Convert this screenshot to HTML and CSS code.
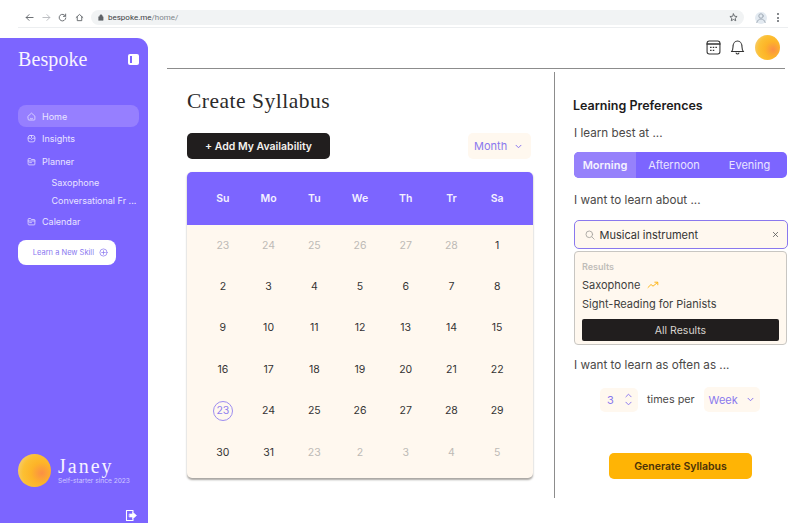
FILE: index.html
```html
<!DOCTYPE html>
<html lang="en">
<head>
<meta charset="utf-8">
<title>Bespoke</title>
<link rel="stylesheet" href="styles.css">
</head>
<body>
<header class="chrome">
  <div class="chrome-nav">
    <svg class="ci" viewBox="0 0 10 10"><path d="M9 5H1.500M4.500 1.800 1.300 5l3.200 3.200" /></svg>
    <svg class="ci faded" viewBox="0 0 10 10"><path d="M1 5h7.500M5.500 1.800 8.700 5 5.500 8.200" /></svg>
    <svg class="ci" viewBox="0 0 10 10"><path d="M8.300 3.400A3.700 3.700 0 1 0 8.700 5.500M8.500 1.200v2.500H6" /></svg>
    <svg class="ci" viewBox="0 0 10 10"><path d="M1.300 5 5 1.600 8.700 5M2.500 4.200v4.300h5V4.200" /></svg>
  </div>
  <div class="url">
    <svg class="lock" viewBox="0 0 8 10"><path d="M1 4h6v5H1zM2.300 4V2.700a1.700 1.700 0 0 1 3.400 0V4" /></svg>
    <span class="host">bespoke.me</span><span class="path">/home/</span>
    <svg class="star" viewBox="0 0 10 10"><path d="m5 1 1.200 2.600 2.800.3-2.100 1.900.6 2.800L5 7.200 2.500 8.600l.6-2.800L1 3.900l2.800-.3z" /></svg>
  </div>
  <div class="chrome-end">
    <span class="profile"><svg viewBox="0 0 12 12"><circle cx="6" cy="4" r="2.200" /><path d="M1.800 10.500c.6-2.400 2.400-3.500 4.200-3.500s3.600 1.100 4.200 3.500" /></svg></span>
    <span class="dots"><i></i><i></i><i></i></span>
  </div>
</header>

<div class="app">
  <aside class="sidebar">
    <div class="brand">
      <span class="logo">Bespoke</span>
      <span class="panel-icon"><i></i></span>
    </div>
    <nav class="nav">
      <a class="nav-item active">
        <svg class="ni" viewBox="0 0 12 12"><path d="M1.500 5.500 6 1.500l4.500 4v4.200a1 1 0 0 1-1 1h-7a1 1 0 0 1-1-1z" /><path d="M4.500 8.500c1 .7 2 .7 3 0" /></svg>
        Home
      </a>
      <a class="nav-item">
        <svg class="ni" viewBox="0 0 12 12"><rect x="1.500" y="2" width="9" height="8.500" rx="2.500" /><path d="M1.500 5.500h2.500l2 2 2-2h2.500M6 2v3" /></svg>
        Insights
      </a>
      <a class="nav-item">
        <svg class="ni" viewBox="0 0 12 12"><path d="M1.500 3a1 1 0 0 1 1-1h2.300l1 1.300h3.700a1 1 0 0 1 1 1v5.200a1 1 0 0 1-1 1h-7a1 1 0 0 1-1-1zM1.500 5.300h9M3.500 7.500h2.500" /></svg>
        Planner
      </a>
      <a class="nav-sub first">Saxophone</a>
      <a class="nav-sub">Conversational Fr ...</a>
      <a class="nav-item cal">
        <svg class="ni" viewBox="0 0 12 12"><path d="M1.500 3a1 1 0 0 1 1-1h2.300l1 1.300h3.700a1 1 0 0 1 1 1v5.200a1 1 0 0 1-1 1h-7a1 1 0 0 1-1-1zM1.500 5.300h9M3.500 7.500h2.500" /></svg>
        Calendar
      </a>
    </nav>
    <button class="learn">Learn a New Skill
      <svg viewBox="0 0 10 10"><circle cx="5" cy="5" r="4" /><path d="M5 3v4M3 5h4" /></svg>
    </button>
    <div class="user">
      <span class="avatar big"></span>
      <div class="user-text">
        <div class="user-name">Janey</div>
        <div class="user-tag">Self-starter since 2023</div>
      </div>
    </div>
    <div class="logout">
      <svg viewBox="0 0 12 13"><path class="out" d="M8 3V1.500H1.500v10H8V10" /><path class="arrow" d="M4.500 5h3V3l4 3.500-4 3.500V8h-3z" /></svg>
    </div>
  </aside>

  <main class="main">
    <div class="topbar">
      <svg class="t-ico" viewBox="0 0 14 14"><rect x="1" y="1" width="12" height="12" rx="2" /><path class="thick" d="M1 3.800h12" /><path class="dotted" d="M3.800 6.800h1.400M6.300 6.800h1.400M8.800 6.800h1.400M3.800 9.600h1.400M6.300 9.600h1.400" /></svg>
      <svg class="t-ico" viewBox="0 0 14 14"><path d="M1.300 10.800c1.200-1 1.500-2.300 1.500-4.300C2.800 3.300 4.600 1 7 1s4.200 2.300 4.200 5.500c0 2 .3 3.300 1.500 4.300zM5.700 12.200c.5 1.100 2.100 1.100 2.600 0" /></svg>
      <span class="avatar small"></span>
    </div>
    <div class="rule"></div>
    <div class="content">
      <section class="left">
        <h1>Create Syllabus</h1>
        <div class="toolbar">
          <button class="add">+ Add My Availability</button>
          <div class="select month">Month <svg class="chev" viewBox="0 0 8 6"><path d="m1 1.500 3 3 3-3" /></svg></div>
        </div>
        <div class="calendar">
          <div class="cal-head">
            <span>Su</span><span>Mo</span><span>Tu</span><span>We</span><span>Th</span><span>Tr</span><span>Sa</span>
          </div>
          <div class="cal-body">
            <span class="mute">23</span><span class="mute">24</span><span class="mute">25</span><span class="mute">26</span><span class="mute">27</span><span class="mute">28</span><span>1</span>
            <span>2</span><span>3</span><span>4</span><span>5</span><span>6</span><span>7</span><span>8</span>
            <span>9</span><span>10</span><span>11</span><span>12</span><span>13</span><span>14</span><span>15</span>
            <span>16</span><span>17</span><span>18</span><span>19</span><span>20</span><span>21</span><span>22</span>
            <span class="today"><b>23</b></span><span>24</span><span>25</span><span>26</span><span>27</span><span>28</span><span>29</span>
            <span>30</span><span>31</span><span class="mute">23</span><span class="mute">2</span><span class="mute">3</span><span class="mute">4</span><span class="mute">5</span>
          </div>
        </div>
      </section>
      <section class="right">
        <h2>Learning Preferences</h2>
        <p class="label first">I learn best at ...</p>
        <div class="segments">
          <span class="seg on">Morning</span>
          <span class="seg mid">Afternoon</span>
          <span class="seg end">Evening</span>
        </div>
        <p class="label about">I want to learn about ...</p>
        <div class="search">
          <svg class="s-ico" viewBox="0 0 10 10"><circle cx="4.300" cy="4.300" r="3.300" /><path d="m6.800 6.800 2.400 2.400" /></svg>
          <span class="s-text">Musical instrument</span>
          <svg class="s-x" viewBox="0 0 8 8"><path d="m1.500 1.500 5 5M6.500 1.500l-5 5" /></svg>
        </div>
        <div class="results">
          <div class="r-title">Results</div>
          <div class="r-item">Saxophone
            <svg class="trend" viewBox="0 0 12 8"><path d="m1 6.500 3-3 2 1.700L10.500 1.500M7.800 1.200h3v2.600" /></svg>
          </div>
          <div class="r-item">Sight-Reading for Pianists</div>
          <button class="all">All Results</button>
        </div>
        <p class="label often">I want to learn as often as ...</p>
        <div class="freq">
          <div class="stepper">3
            <span class="arrows">
              <svg viewBox="0 0 8 5"><path d="m1 4 3-3 3 3" /></svg>
              <svg viewBox="0 0 8 5"><path d="m1 1 3 3 3-3" /></svg>
            </span>
          </div>
          <span class="times">times per</span>
          <div class="select week">Week <svg class="chev" viewBox="0 0 8 6"><path d="m1 1.500 3 3 3-3" /></svg></div>
        </div>
        <div class="gen-wrap"><button class="generate">Generate Syllabus</button></div>
      </section>
    </div>
  </main>
</div>
</body>
</html>
```
FILE: styles.css
```css
* { box-sizing: border-box; }
html, body { margin: 0; height: 100%; }
body {
  width: 806px;
  height: 523px;
  overflow: hidden;
  background: #fff;
  font-family: "Inter", "Liberation Sans", sans-serif;
  color: #2c2a2a;
}
svg { display: block; fill: none; stroke: currentColor; stroke-linecap: round; stroke-linejoin: round; }
button { font-family: inherit; border: 0; padding: 0; }
p, h1, h2 { margin: 0; }

/* browser chrome */
.chrome {
  height: 28px;
  margin: 0 18px 0 18px;
  padding: 10px 0 0 7px;
  display: flex;
  align-items: flex-start;
  border-bottom: 1px solid #eceef0;
}
.chrome-nav { display: flex; gap: 7.500px; width: 66px; padding-top: 3px; color: #5f6368; }
.ci { width: 9px; height: 9px; stroke-width: 1; }
.ci.faded { color: #b5b8bc; }
.url {
  width: 653px;
  height: 15px;
  flex: none;
  background: #f1f3f4;
  border-radius: 8px;
  display: flex;
  align-items: center;
  padding: 0 6px 0 7px;
  font-size: 8px;
  font-family: "Roboto", sans-serif;
}
.lock { width: 6px; height: 7px; margin-right: 4px; color: #5f6368; fill: #5f6368; stroke-width: .8; }
.host { color: #3c4043; }
.path { color: #80868b; }
.star { width: 9px; height: 9px; margin-left: auto; color: #5f6368; stroke-width: 1; }
.chrome-end { display: flex; align-items: center; height: 15px; margin-left: 11px; gap: 10px; }
.profile {
  width: 12px; height: 12px; border-radius: 50%;
  background: #e3eaf1; color: #a3adb8; display: block;
}
.profile svg { width: 12px; height: 12px; stroke-width: 1; }
.dots { display: flex; flex-direction: column; gap: 1.500px; }
.dots i { width: 2px; height: 2px; background: #5f6368; border-radius: 50%; display: block; }

/* app */
.app { display: flex; height: 495px; padding-top: 10px; }
.sidebar {
  width: 148px;
  flex: none;
  height: 485px;
  background: #7c65ff;
  border-radius: 0 11px 0 0;
  padding: 10px 9px 0 18px;
  display: flex;
  flex-direction: column;
  color: #fff;
}
.brand { display: flex; align-items: center; justify-content: space-between; height: 22px; }
.logo { font-family: "Liberation Serif", serif; font-size: 20px; color: #f8f3ff; letter-spacing: .1px; }
.panel-icon {
  width: 11px; height: 11px; background: #fff; border-radius: 2px;
  padding: 2px; display: block;
}
.panel-icon i { display: block; width: 2px; height: 7px; background: #7c65ff; }
.nav { margin-top: 35px; display: flex; flex-direction: column; }
.nav-item {
  height: 22px;
  border-radius: 8px;
  display: flex;
  align-items: center;
  gap: 6px;
  padding-left: 9px;
  font-size: 9px;
  color: #e9e4ff;
  margin-bottom: .7px;
}
.nav-item.active { background: #967fff; }
.ni { width: 9px; height: 9px; stroke-width: 1; flex: none; }
.nav-sub {
  height: 18px;
  display: flex;
  align-items: center;
  padding-left: 33.500px;
  font-size: 9px;
  color: #e9e4ff;
  white-space: nowrap;
}
.nav-sub.first { margin-top: .5px; }
.nav-item.cal { margin-top: 1px; }
.learn {
  margin-top: 7px;
  width: 98px;
  height: 25px;
  background: #fff;
  border-radius: 8px;
  color: #8a78f0;
  font-size: 7.500px;
  display: flex;
  align-items: center;
  justify-content: flex-end;
  gap: 5px;
  padding-right: 8px;
}
.learn svg { width: 9px; height: 9px; stroke-width: .8; }
.user { margin-top: auto; display: flex; align-items: center; gap: 7px; }
.avatar {
  display: block;
  border-radius: 50%;
  background: radial-gradient(circle at 72% 58%, #fb8f45 0%, #fdb428 35%, #fcc033 62%, #f0d5a0 100%);
  flex: none;
}
.avatar.big { width: 33px; height: 33px; }
.avatar.small { width: 25px; height: 25px; margin-left: 1px; }
.user-name { font-family: "Liberation Serif", serif; font-size: 20px; line-height: 20px; color: #f6f2ff; letter-spacing: 2px; }
.user-tag { font-size: 6.600px; color: #cfc6ff; line-height: 8px; margin-top: 1px; white-space: nowrap; }
.logout { margin-top: 22px; height: 14px; display: flex; justify-content: flex-end; padding-right: 2px; }
.logout svg { width: 12px; height: 13px; stroke-width: 1.100; }
.logout .arrow { fill: #fff; stroke: #fff; stroke-width: .6; }

/* main */
.main { flex: 1; padding: 0 21px 0 19px; min-width: 0; display: flex; flex-direction: column; }
.topbar { height: 30px; flex: none; padding: 0 5px 12px 0; display: flex; justify-content: flex-end; align-items: center; gap: 9px; color: #333; }
.t-ico { width: 15px; height: 15px; stroke-width: 1; }
.thick { stroke-width: 1.400; }
.dotted { stroke-width: 1.200; stroke-linecap: butt; }
.rule { height: 1px; background: #8c8c8c; flex: none; }
.content { display: flex; flex: 1; padding-top: 3px; }
.left { width: 387px; padding: 16px 21px 0 20px; flex: none; }
h1 {
  font-family: "Liberation Serif", serif;
  font-weight: 400;
  font-size: 21.500px;
  line-height: 26px;
  color: #2b2a2a;
  letter-spacing: .5px;
}
.toolbar { display: flex; justify-content: space-between; align-items: center; margin-top: 19px; padding-right: 2px; }
.add {
  width: 143px; height: 26px; background: #211e1e; color: #f5f2ee; border-radius: 5px;
  font-size: 10.500px; font-weight: 600;
}
.select {
  background: #fff8ef;
  border-radius: 5px;
  color: #8a78ee;
  display: flex;
  align-items: center;
  font-size: 11px;
}
.month { width: 63px; height: 26px; padding-left: 6px; gap: 8px; }
.chev { width: 7px; height: 5px; stroke-width: 1.200; }
.calendar {
  margin-top: 12.500px;
  width: 346px;
  height: 306px;
  border-radius: 5px;
  overflow: hidden;
  background: #fff8ef;
  box-shadow: 0 1.500px 2px #a9a6a2;
}
.cal-head {
  height: 53px;
  background: #7c65ff;
  padding: 0 13px;
  display: grid;
  grid-template-columns: repeat(7, 1fr);
  align-items: center;
  justify-items: center;
  color: #f4f1ff;
  font-size: 10.500px;
  font-weight: 600;
}
.cal-body {
  display: grid;
  grid-template-columns: repeat(7, 1fr);
  grid-auto-rows: 41.400px;
  padding: 0 13px;
  font-size: 10.500px;
  color: #333;
}
.cal-body span { display: flex; align-items: center; justify-content: center; }
.cal-body .mute { color: #bdbab6; }
.today b {
  font-weight: 400;
  width: 20px; height: 20px;
  border: 1px solid #9d8df0;
  border-radius: 50%;
  color: #8f7ff0;
  display: flex; align-items: center; justify-content: center;
}

/* right */
.right {
  width: 233px;
  flex: none;
  height: 426px;
  border-left: 1px solid #8c8c8c;
  padding: 27px 0 0 19px;
  font-size: 12px;
}
h2 { font-size: 12.500px; font-weight: 600; color: #1d1b1b; line-height: 14px; margin-left: -1px; }
.label { font-size: 11.700px; line-height: 15px; color: #4b4948; }
.label.first { margin-top: 13px; }
.segments {
  margin-top: 11px;
  width: 213px;
  height: 26px;
  background: #7c65ff;
  border-radius: 5px;
  overflow: hidden;
  display: flex;
  color: #e9e4ff;
  font-size: 11px;
}
.seg { display: flex; align-items: center; justify-content: center; }
.seg.on { width: 62px; background: #9681fb; font-weight: 600; color: #f5f2ff; }
.seg.mid { width: 76px; }
.seg.end { flex: 1; }
.label.about { margin-top: 15px; }
.search {
  margin-top: 12px;
  width: 214px;
  height: 29px;
  border: 1.500px solid #8a78ee;
  border-radius: 5px;
  background: #fff8ef;
  display: flex;
  align-items: center;
  padding: 0 8px 0 10px;
  margin-left: -.5px;
}
.s-ico { width: 10px; height: 10px; color: #a8a6a2; stroke-width: .9; }
.s-text { margin-left: 5px; font-size: 11px; color: #333; }
.s-x { width: 7px; height: 7px; margin-left: auto; color: #555; stroke-width: .9; }
.results {
  margin-top: 2px;
  width: 213px;
  height: 94px;
  border: 1px solid #c8c6c2;
  border-radius: 4px;
  background: #fff8ef;
  padding: 9px 7px 0 7px;
  font-size: 11px;
  color: #403e3d;
}
.r-title { font-size: 9px; font-weight: 600; color: #bfbdb9; line-height: 11px; }
.r-item { display: flex; align-items: center; gap: 7px; line-height: 14px; height: 14px; margin-top: 5.500px; }
.trend { width: 12px; height: 8px; color: #fdb61a; stroke-width: 1; }
.all {
  margin-top: 8px;
  display: block;
  width: 197px;
  height: 22px;
  background: #211e1e;
  color: #d8d4cf;
  font-size: 10.500px;
  border-radius: 2px;
}
.label.often { margin-top: 13px; }
.freq { display: flex; align-items: center; margin-top: 14px; padding-left: 26px; }
.stepper {
  width: 38px;
  height: 24px;
  border-radius: 5px;
  background: #fff8ef;
  color: #8a78ee;
  display: flex;
  align-items: center;
  justify-content: space-between;
  padding: 0 6px 0 7px;
  font-size: 11px;
}
.arrows { display: flex; flex-direction: column; gap: 3px; }
.arrows svg { width: 7px; height: 5px; stroke-width: 1.100; }
.times { margin-left: 9px; font-size: 10.800px; color: #4b4948; }
.week { margin-left: 9px; width: 56px; height: 25px; padding-left: 5px; gap: 9px; }
.gen-wrap { margin-top: 41px; padding-left: 35px; }
.generate {
  width: 143px; height: 26px; background: #ffb405; color: #4b3208; border-radius: 5px;
  font-size: 10.500px; font-weight: 600;
}
```
